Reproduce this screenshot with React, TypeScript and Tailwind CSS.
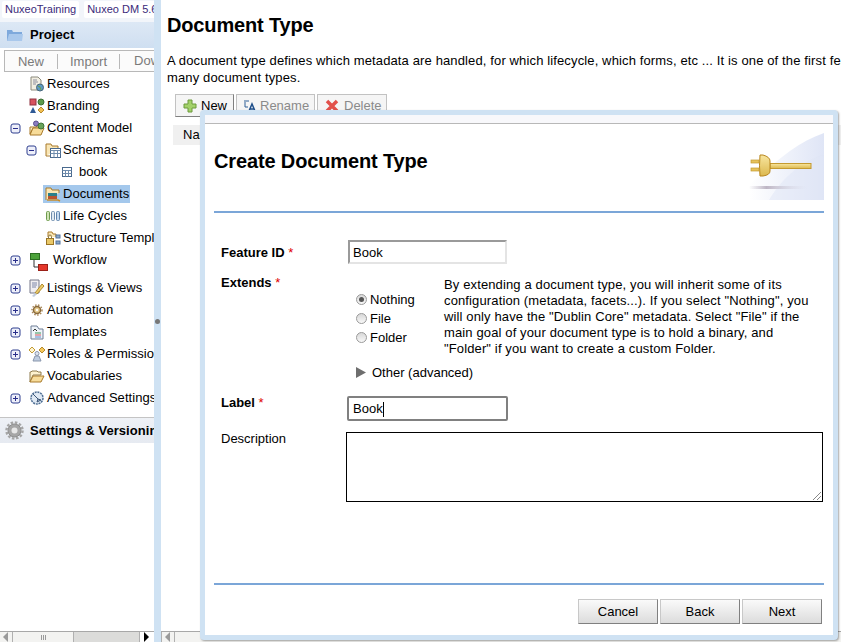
import type { ReactNode } from "react";

const PlusBox = () => (
  <svg width="11" height="11" viewBox="0 0 11 11" className="shrink-0">
    <rect x="1" y="1" width="9" height="9" rx="2" fill="#eef0fa" stroke="#2f3f8f" />
    <path d="M3 5.5h5M5.5 3v5" stroke="#2a2f8a" />
  </svg>
);

const MinusBox = () => (
  <svg width="11" height="11" viewBox="0 0 11 11" className="shrink-0">
    <rect x="1" y="1" width="9" height="9" rx="2" fill="#eef0fa" stroke="#2f3f8f" />
    <path d="M3 5.5h5" stroke="#2a2f8a" />
  </svg>
);

const OpenFolder = ({ fill = "#f7dc9a" }: { fill?: string }) => (
  <svg width="16" height="13" viewBox="0 0 16 13">
    <path d="M1 2h1l1-1h5l1 1h3v3H4L1 12z" fill="#fdf2cf" stroke="#8f7a4c" />
    <path d="M1 12l3-6h11l-3 6z" fill={fill} stroke="#a97b2c" />
  </svg>
);

const GridIcon = () => (
  <svg width="10" height="10" viewBox="0 0 10 10">
    <rect x=".5" y=".5" width="9" height="9" fill="#fff" stroke="#4a6a8e" />
    <path d="M.5 3.500h9M.5 6.500h9M3.500 3.500v6M6.500 3.500v6" stroke="#6f8cad" />
  </svg>
);

const rowIcons: Record<string, ReactNode> = {
  resources: (
    <svg width="16" height="16" viewBox="0 0 16 16">
      <path d="M2 1h7l3 3v10H2z" fill="#f2efe2" stroke="#8b8a7c" />
      <path d="M4 4h4M4 6h5M4 8h3" stroke="#8c8fa0" />
      <circle cx="11" cy="11.500" r="3.500" fill="#5d9bc2" stroke="#48667a" />
      <path d="M9 10l2 1 1 3" stroke="#6ca04a" fill="none" />
    </svg>
  ),
  branding: (
    <svg width="16" height="16" viewBox="0 0 16 16">
      <rect x="1" y="1" width="6" height="6" fill="#d8525f" stroke="#8f3340" />
      <circle cx="12" cy="4" r="3" fill="#5c9a4a" stroke="#3a6e34" />
      <path d="M4 9l3 6H1z" fill="#2f5a96" />
      <path d="M12 9l3 3-3 3-3-3z" fill="#f2bf52" stroke="#b88a2c" />
    </svg>
  ),
  content: (
    <svg width="16" height="16" viewBox="0 0 16 16">
      <path d="M1 7h6l1-1h5v2H4L1 14z" fill="#fdf2cf" stroke="#a97b2c" />
      <path d="M1 15l3-7h11l-3 7z" fill="#f7dc9a" stroke="#a97b2c" />
      <circle cx="7" cy="3.500" r="2.500" fill="#8a7cc0" stroke="#5a4f8f" />
      <circle cx="12" cy="6" r="3" fill="#6aa35a" stroke="#3f7437" />
    </svg>
  ),
  schemas: (
    <svg width="16" height="16" viewBox="0 0 16 16">
      <path d="M1 14V2h5l1 2h6v3" fill="#f9e6b5" stroke="#a97b2c" />
      <path d="M1 14h5" stroke="#a97b2c" />
      <rect x="5.500" y="6.500" width="10" height="9" fill="#fff" stroke="#4a6a8e" />
      <path d="M5.500 8.500h10M5.500 11.500h10M9 8.500v7M12.500 8.500v7" stroke="#6f8cad" />
    </svg>
  ),
  documents: (
    <svg width="16" height="16" viewBox="0 0 16 16">
      <path d="M1 14V2h5l1 2h7v3" fill="#f9e6b5" stroke="#a97b2c" />
      <rect x="3" y="7" width="9" height="3" fill="#2a7f8a" />
      <rect x="3" y="10" width="9" height="3" fill="#b9542f" />
      <path d="M2 14h11l2 1" stroke="#c88d2b" fill="none" strokeWidth="1.500" />
    </svg>
  ),
  lifecycles: (
    <svg width="14" height="10" viewBox="0 0 14 10">
      <rect x=".5" y=".5" width="3" height="9" rx="1" fill="#cfe3b5" stroke="#6e9b4e" />
      <rect x="5.500" y=".5" width="3" height="9" rx="1" fill="#dfe9f2" stroke="#6f8cad" />
      <rect x="10.500" y=".5" width="3" height="9" rx="1" fill="#c4d8ee" stroke="#5e84ad" />
    </svg>
  ),
  structure: (
    <svg width="16" height="16" viewBox="0 0 16 16">
      <path d="M3 7V2h4l1 2h3v3" fill="#f9e6b5" stroke="#a97b2c" />
      <rect x="1.500" y="8.500" width="7" height="6" fill="#e9c868" stroke="#9a7424" />
      <path d="M3.500 8.500V6.500a1.500 1.500 0 0 1 3 0v2" fill="none" stroke="#8a7a4c" />
      <rect x="11" y="5" width="4" height="3" fill="#89a8cc" stroke="#54739a" />
      <rect x="11" y="11" width="4" height="3" fill="#89a8cc" stroke="#54739a" />
    </svg>
  ),
  listings: (
    <svg width="16" height="18" viewBox="0 0 16 18">
      <path d="M1 1h9v13H1z" fill="#f0eef0" stroke="#77798a" />
      <path d="M3 4h5M3 6h5M3 8h4" stroke="#7d86a8" />
      <path d="M6 14l7-9 2 2-7 8z" fill="#eccb6c" stroke="#b08c2e" />
      <path d="M3 17l3-3 2 1-3 3z" fill="#c2cedf" />
    </svg>
  ),
  automation: (
    <svg width="12" height="12" viewBox="0 0 12 12">
      <circle cx="6" cy="6" r="3.500" fill="#e4c98c" stroke="#8a6a3c" strokeWidth="1.500" />
      <circle cx="6" cy="6" r="5" fill="none" stroke="#a8885a" strokeWidth="1.500" strokeDasharray="1.500 1.500" />
      <circle cx="6" cy="6" r="1.200" fill="#fff" />
    </svg>
  ),
  templates: (
    <svg width="14" height="15" viewBox="0 0 14 15">
      <path d="M1 1h6l2 3h4v10H1z" fill="#eef3f8" stroke="#6f7f97" />
      <path d="M3 6l2-2 2 2" fill="none" stroke="#333" />
      <path d="M5 8h6" stroke="#3a9a5a" />
      <path d="M5 10h6" stroke="#d8525f" />
      <path d="M5 12h6" stroke="#5a8ad0" />
    </svg>
  ),
  roles: (
    <svg width="16" height="16" viewBox="0 0 16 16">
      <path d="M3 1l3 3-3 3-3-3z" fill="#fff4cf" stroke="#c29b33" />
      <path d="M13 1l3 3-3 3-3-3z" fill="#f4c75c" stroke="#b58a2a" />
      <circle cx="8" cy="7.500" r="2" fill="#e1e6ef" stroke="#8a97ad" />
      <path d="M4 15l2-5h4l2 5z" fill="#bfcde0" stroke="#8a97ad" />
    </svg>
  ),
  vocabularies: <OpenFolder />,
  advanced: (
    <svg width="14" height="14" viewBox="0 0 14 14">
      <circle cx="7" cy="7" r="6" fill="#dfe9f4" stroke="#4f6f94" strokeWidth="1.500" strokeDasharray="2 .8" />
      <path d="M3 3l5 5M8 8l-1 3 4-2z" stroke="#3d5676" fill="#9fb6d1" />
    </svg>
  ),
};

type TreeRowProps = {
  depth: number;
  toggle?: "plus" | "minus";
  icon?: string;
  label: string;
  selected?: boolean;
};

function TreeRow({ depth, toggle, icon, label, selected }: TreeRowProps) {
  return (
    <div className={`flex h-[22px] items-center whitespace-nowrap ${depth === 0 ? "pl-[10px]" : "pl-[26px]"}`}>
      <span className="flex w-[17px] shrink-0 items-center">
        {toggle === "plus" && <PlusBox />}
        {toggle === "minus" && <MinusBox />}
      </span>
      <span className={`flex h-[18px] items-center ${selected ? "bg-[#a4c8ec]" : ""}`}>
        <span className="flex w-[19px] shrink-0 items-center justify-center">{icon && rowIcons[icon]}</span>
        <span className="pl-[1px] pr-[1px]">{label}</span>
      </span>
    </div>
  );
}

function BookRow() {
  return (
    <div className="flex h-[22px] items-center gap-[3px] pl-[62px]">
      <GridIcon />
      <span className="pl-[4px]">book</span>
    </div>
  );
}

function WorkflowRow() {
  return (
    <div className="mb-[6px] flex h-[22px] items-center whitespace-nowrap pl-[10px]">
      <span className="flex w-[20px] shrink-0 items-center">
        <PlusBox />
      </span>
      <svg width="18" height="18" viewBox="0 0 18 18" className="mt-[4px] shrink-0">
        <rect x=".5" y=".5" width="9" height="6" fill="#4ca23a" stroke="#2c6e22" />
        <rect x="8.500" y="11.500" width="9" height="6" fill="#e4372b" stroke="#9a2018" />
        <path d="M4 7v7h4" fill="none" stroke="#333" />
      </svg>
      <span className="pl-[5px]">Workflow</span>
    </div>
  );
}

function ScrollButton({ dir, dark }: { dir: "left" | "right"; dark?: boolean }) {
  return (
    <svg width="6" height="10" viewBox="0 0 6 10">
      <path d={dir === "left" ? "M5 0v10L0 5z" : "M0 0v10l5-5z"} fill={dark ? "#000" : "#9a9a9a"} />
    </svg>
  );
}

function Sidebar() {
  return (
    <aside className="relative flex h-full w-[154px] shrink-0 flex-col overflow-hidden bg-white text-[13px] tracking-[0.05px] text-black">
      <div className="flex h-[22px] shrink-0 gap-[5px] whitespace-nowrap bg-[#f2f5fa] pl-[2px] pt-[1px] text-[11px] tracking-normal text-[#3b2a7a]">
        <span className="h-[17px] rounded-[2px] bg-white px-[3px] leading-[17px]">NuxeoTraining</span>
        <span className="h-[17px] rounded-[2px] bg-white px-[3px] leading-[17px]">Nuxeo DM 5.6</span>
      </div>
      <div className="flex h-[26px] shrink-0 items-center gap-[6px] whitespace-nowrap bg-gradient-to-b from-[#dde8f5] to-[#cfdff1] pl-[6px] font-bold">
        <svg width="18" height="13" viewBox="0 0 18 13">
          <path d="M1 12V1h5l1 2h9v9z" fill="#7ea9dc" />
          <path d="M1 12l2-7h14l-1 7z" fill="#a9c8ec" />
        </svg>
        Project
      </div>
      <div className="ml-[4px] mt-[2px] flex h-[22px] shrink-0 items-center whitespace-nowrap border-y border-l border-[#b8b8b8] bg-[#fbfbfb] text-[#7a7a7a]">
        <span className="w-[53px] shrink-0 border-r border-[#b8b8b8] text-center leading-[15px]">New</span>
        <span className="w-[62px] shrink-0 border-r border-[#b8b8b8] text-center leading-[15px]">Import</span>
        <span className="shrink-0 pl-[14px]">Dow</span>
      </div>
      <div className="mt-[1px]">
        <TreeRow depth={0} icon="resources" label="Resources" />
        <TreeRow depth={0} icon="branding" label="Branding" />
        <TreeRow depth={0} toggle="minus" icon="content" label="Content Model" />
        <TreeRow depth={1} toggle="minus" icon="schemas" label="Schemas" />
        <BookRow />
        <TreeRow depth={1} icon="documents" label="Documents" selected />
        <TreeRow depth={1} icon="lifecycles" label="Life Cycles" />
        <TreeRow depth={1} icon="structure" label="Structure Templates" />
        <WorkflowRow />
        <TreeRow depth={0} toggle="plus" icon="listings" label="Listings & Views" />
        <TreeRow depth={0} toggle="plus" icon="automation" label="Automation" />
        <TreeRow depth={0} toggle="plus" icon="templates" label="Templates" />
        <TreeRow depth={0} toggle="plus" icon="roles" label="Roles & Permissions" />
        <TreeRow depth={0} icon="vocabularies" label="Vocabularies" />
        <TreeRow depth={0} toggle="plus" icon="advanced" label="Advanced Settings" />
      </div>
      <div className="mt-[8px] flex h-[26px] shrink-0 items-center gap-[6px] whitespace-nowrap border-t border-[#c4c4c4] bg-gradient-to-b from-[#eef1f6] to-[#e6eaf1] pl-[5px] font-bold">
        <svg width="19" height="19" viewBox="0 0 19 19" className="shrink-0">
          <circle cx="9.500" cy="9.500" r="6.500" fill="#a6a6a6" stroke="#8c8c8c" strokeWidth="1" />
          <circle cx="9.500" cy="9.500" r="8" fill="none" stroke="#a6a6a6" strokeWidth="2.500" strokeDasharray="2.500 1.700" />
          <circle cx="9.500" cy="9.500" r="3" fill="#e7e7e7" />
        </svg>
        Settings & Versioning
      </div>
      <div className="mt-auto flex h-[11px] shrink-0 items-stretch border-t border-[#a8a8a8] bg-[#f3f3f1]">
        <span className="flex w-[13px] items-center justify-center border-r border-[#b0b0b0]">
          <ScrollButton dir="left" />
        </span>
        <span className="flex w-[60px] items-center justify-center gap-[1px]">
          <i className="h-[5px] w-px bg-[#9a9a9a]" />
          <i className="h-[5px] w-px bg-[#9a9a9a]" />
          <i className="h-[5px] w-px bg-[#9a9a9a]" />
        </span>
        <span className="w-[66px] border-l border-[#b0b0b0] bg-[#dcdcda]" />
        <span className="flex flex-1 items-center justify-center border-l border-[#b0b0b0] bg-white">
          <ScrollButton dir="right" dark />
        </span>
      </div>
    </aside>
  );
}

function Main() {
  const toolButton = "flex h-[23px] shrink-0 items-center border border-[#c2c2c2] bg-[#f5f5f5]";
  return (
    <main className="relative h-full min-w-0 flex-1 overflow-hidden bg-white text-[13px] text-black">
      <div className="pl-[6px]">
        <h1 className="pt-[12px] text-[20px] font-bold leading-[26px] tracking-[-0.15px]">Document Type</h1>
        <p className="mt-[14px] whitespace-nowrap leading-[17px] tracking-[0.13px]">
          A document type defines which metadata are handled, for which lifecycle, which forms, etc ... It is one of the first features
          <br />
          many document types.
        </p>
      </div>
      <div className="ml-[14px] mt-[8px] flex gap-[2px]">
        <div className={`${toolButton} w-[59px] gap-[4px] border-b-[#808080] border-r-[#808080] pl-[7px]`}>
          <svg width="14" height="14" viewBox="0 0 14 14">
            <path d="M5 1h4v4h4v4H9v4H5V9H1V5h4z" fill="#a3d16a" stroke="#6c9a3c" />
          </svg>
          New
        </div>
        <div className={`${toolButton} w-[79px] gap-[3px] pl-[6px] text-[#8a8a8a]`}>
          <svg width="14" height="12" viewBox="0 0 14 12">
            <path d="M1 1h5M2 2v5h3" fill="none" stroke="#2f5f96" />
            <path d="M6 11l3-7 3 7M7 9h4" fill="none" stroke="#1f4f8a" strokeWidth="1.500" />
          </svg>
          Rename
        </div>
        <div className={`${toolButton} w-[70px] gap-[5px] pl-[7px] text-[#8a8a8a]`}>
          <svg width="14" height="14" viewBox="0 0 14 14">
            <path d="M2 2l10 10M12 2L2 12" stroke="#e2504a" strokeWidth="3.500" />
          </svg>
          Delete
        </div>
      </div>
      <div className="ml-[12px] mt-[8px] h-[20px] bg-[#f0f0f0] pl-[10px] leading-[20px]">Name</div>
      <div className="absolute bottom-0 left-0 flex h-[11px] w-full border-t border-[#a8a8a8] bg-[#f3f3f1]">
        <span className="flex w-[14px] items-center justify-center border-x border-[#b0b0b0]">
          <ScrollButton dir="left" />
        </span>
      </div>
    </main>
  );
}

function PlugArt() {
  return (
    <svg width="75" height="67" viewBox="0 0 75 67" className="shrink-0">
      <defs>
        <linearGradient id="bgFade" x1="0" y1="0" x2="1" y2="0">
          <stop offset="0" stopColor="#ffffff" />
          <stop offset="1" stopColor="#dfe5f6" />
        </linearGradient>
        <linearGradient id="brass" x1="0" y1="0" x2="0" y2="1">
          <stop offset="0" stopColor="#f8e6a0" />
          <stop offset="1" stopColor="#dcb84e" />
        </linearGradient>
        <linearGradient id="shadow" x1="0" y1="0" x2="1" y2="0">
          <stop offset="0" stopColor="#c9c3cf" stopOpacity="0" />
          <stop offset=".3" stopColor="#bdb5c4" />
          <stop offset="1" stopColor="#d8d8e6" stopOpacity="0" />
        </linearGradient>
      </defs>
      <path d="M0 67V52C20 35 45 10 75 0v67z" fill="url(#bgFade)" />
      <path d="M20 67C30 50 50 28 75 22v45z" fill="#dfe5f6" fillOpacity=".5" />
      <rect x="0" y="53" width="58" height="3" fill="url(#shadow)" />
      <rect x="21" y="30.500" width="41" height="5" fill="url(#brass)" stroke="#c49a30" />
      <path d="M11 22h3q7 2 7 6v10q0 4-7 5h-3q-1-10 0-21z" fill="url(#brass)" stroke="#b8861e" />
      <rect x="2" y="27" width="8" height="3" fill="#e6c25c" stroke="#c49a30" strokeWidth=".7" />
      <rect x="2" y="35" width="8" height="3" fill="#e6c25c" stroke="#c49a30" strokeWidth=".7" />
    </svg>
  );
}

function FieldLabel({ children }: { children: string }) {
  return (
    <span className="font-bold">
      {children}
      <span className="font-normal text-[#e00000]"> *</span>
    </span>
  );
}

function Radio({ label, checked }: { label: string; checked?: boolean }) {
  return (
    <div className="flex h-[19px] items-center">
      <span className="mr-[3px] flex h-[11px] w-[11px] items-center justify-center rounded-full border border-[#9a9a9a] bg-gradient-to-b from-[#d8d8d8] to-[#f8f8f8]">
        {checked && <span className="h-[5px] w-[5px] rounded-full bg-[#555555]" />}
      </span>
      {label}
    </div>
  );
}

function WizardButton({ children }: { children: string }) {
  return (
    <button className="h-[25px] w-[80px] border border-[#c8c8c8] border-b-[#808080] border-r-[#808080] bg-gradient-to-b from-[#fafafa] to-[#dcdcdc] text-[13px] text-black">
      {children}
    </button>
  );
}

function Dialog() {
  return (
    <div className="absolute left-[200px] top-[110px] z-10 flex h-[530px] w-[638px] flex-col rounded-[4px] border-[5px] border-[#cfe2f3] bg-white text-[13px] text-black shadow-[1px_1px_2px_rgba(0,0,0,0.35)]">
      <div className="h-[9px] shrink-0 border-b border-[#b8b8b8] bg-[#f8f8fb]" />
      <div className="ml-[9px] mr-[9px] flex h-[89px] shrink-0 items-start justify-between border-b-2 border-[#7ba6d8]">
        <h2 className="pt-[25px] text-[20px] font-bold leading-[24px] tracking-[-0.14px]">Create Document Type</h2>
        <div className="pt-[9px]">
          <PlugArt />
        </div>
      </div>
      <div className="ml-[16px] mr-[10px] mt-[27px] flex-1">
        <div className="flex h-[24px] items-center">
          <span className="w-[127px] shrink-0 pt-[1px]">
            <FieldLabel>Feature ID</FieldLabel>
          </span>
          <div className="h-[24px] w-[159px] border-2 border-[#9a9a9a] border-b-[#e4e4e4] border-r-[#e4e4e4] pl-[3px] leading-[22px]">
            Book
          </div>
        </div>
        <div className="mt-[9px] flex">
          <span className="w-[135px] shrink-0">
            <FieldLabel>Extends</FieldLabel>
          </span>
          <div className="min-w-0 flex-1">
            <div className="flex">
              <div className="w-[88px] shrink-0 pt-[17px]">
                <Radio label="Nothing" checked />
                <Radio label="File" />
                <Radio label="Folder" />
              </div>
              <p className="mt-[4px] w-[372px] leading-[16px] tracking-[0.13px]">
                By extending a document type, you will inherit some of its
                <br />
                configuration (metadata, facets...). If you select "Nothing", you
                <br />
                will only have the "Dublin Core" metadata. Select "File" if the
                <br />
                main goal of your document type is to hold a binary, and
                <br />
                "Folder" if you want to create a custom Folder.
              </p>
            </div>
            <div className="mt-[6px] flex items-center gap-[5px]">
              <svg width="11" height="11" viewBox="0 0 11 11">
                <path d="M0 0v11l10-5.500z" fill="#6e6e6e" />
              </svg>
              Other (advanced)
            </div>
          </div>
        </div>
        <div className="mt-[13px] flex h-[25px] items-start">
          <span className="mt-[-3px] w-[126px] shrink-0">
            <FieldLabel>Label</FieldLabel>
          </span>
          <div className="flex h-[25px] w-[161px] items-center rounded-[2px] border-2 border-[#808080] pl-[4px] pt-[2px]">
            Book
            <i className="h-[15px] w-px bg-black" />
          </div>
        </div>
        <div className="mt-[11px] flex">
          <span className="mt-[-3px] w-[125px] shrink-0">Description</span>
          <div className="relative h-[70px] w-[477px] border border-black">
            <svg width="10" height="10" viewBox="0 0 10 10" className="absolute bottom-0 right-0">
              <path d="M1 9l8-8M5 9l4-4" stroke="#888" />
            </svg>
          </div>
        </div>
      </div>
      <div className="ml-[9px] mr-[9px] flex h-[52px] shrink-0 justify-end gap-[2px] border-t-2 border-[#7ba6d8] pr-[2px] pt-[14px]">
        <WizardButton>Cancel</WizardButton>
        <WizardButton>Back</WizardButton>
        <WizardButton>Next</WizardButton>
      </div>
    </div>
  );
}

export default function App() {
  return (
    <div className="relative flex h-[642px] w-[841px] overflow-hidden bg-white font-['Liberation_Sans',Arial,sans-serif]">
      <Sidebar />
      <div className="relative flex h-full w-[7px] shrink-0 items-center justify-center bg-[#cfe2f3]">
        <span className="h-[5px] w-[5px] rounded-full bg-[#777777]" />
      </div>
      <Main />
      <Dialog />
    </div>
  );
}
